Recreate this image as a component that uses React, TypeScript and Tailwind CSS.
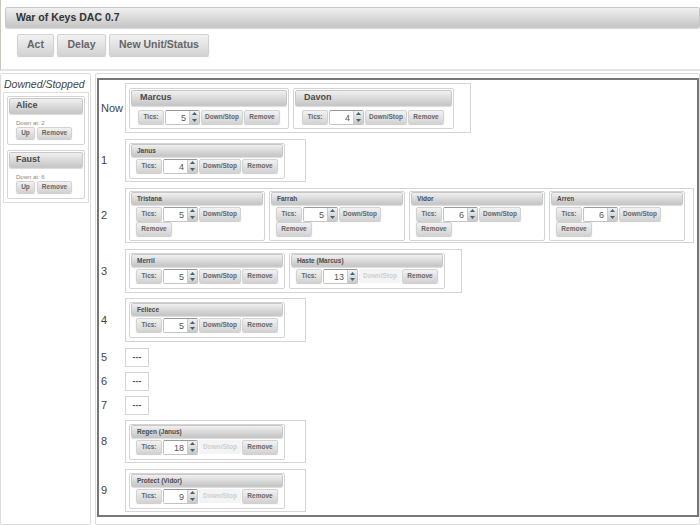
import React from 'react'

const btn =
  'flex items-center justify-center rounded-[2px] border border-[#d2d2d2] bg-linear-to-b from-[#f2f2f2] to-[#d4d4d4] font-bold text-[#666] shadow-[0_1px_1px_rgba(0,0,0,0.2)]'
const bar =
  'flex items-center rounded-[2px] border border-[#c8c8c8] bg-linear-to-b from-[#f0f0f0] to-[#c6c6c6] font-bold text-[#4a4a4a] shadow-[0_1px_1px_rgba(0,0,0,0.15)]'

interface UnitProps {
  name: string
  tics: number
  big?: boolean
  wrap?: boolean
  disabled?: boolean
  width?: string
}

const Spinner = () => (
  <div className="flex w-[10px] flex-col border-l border-[#ccc]">
    <div className="flex h-1/2 items-center justify-center bg-linear-to-b from-[#f2f2f2] to-[#ddd]">
      <svg width="5" height="3" viewBox="0 0 5 3"><path d="M2.5 0L5 3H0z" fill="#3f6478" /></svg>
    </div>
    <div className="flex h-1/2 items-center justify-center bg-linear-to-b from-[#ddd] to-[#c8c8c8]">
      <svg width="5" height="3" viewBox="0 0 5 3"><path d="M0 0h5L2.5 3z" fill="#3f6478" /></svg>
    </div>
  </div>
)

const Unit = ({ name, tics, big, wrap, disabled, width }: UnitProps) => (
  <div className={`rounded-[2px] border border-[#d4d4d4] bg-white px-[1px] ${width} ${big ? 'pt-[1px]' : 'pt-[0px]'}`}>
    <div className={`${bar} ${big ? 'h-[16px] pl-[8px] text-[9px]' : 'h-[13px] pt-[1px] pl-[5px] text-[6.5px]'}`}>{name}</div>
    <div className={`flex flex-wrap items-start ${big ? 'mt-[4px] pb-[3px] pl-[7px]' : 'mt-[2px] pb-[4px] pl-[5px]'}`}>
      <div className={`${btn} h-[14px] w-[26px] text-[6.5px]`}>Tics:</div>
      <div className="ml-[1px] flex h-[15px] w-[35px] overflow-hidden rounded-[2px] border border-[#c4c4c4] border-t-[#999]">
        <div className="flex-1 pr-[3px] text-right text-[9px] leading-[14px] text-[#555]">{tics}</div>
        <Spinner />
      </div>
      <div
        className={`ml-[1px] flex h-[14px] w-[42px] items-center justify-center rounded-[2px] text-[6.5px] font-bold ${
          disabled ? 'bg-[#f4f4f4] text-[#cfcfcf]' : `${btn}`
        }`}
      >
        Down/Stop
      </div>
      <div className={`${btn} ${wrap ? '' : 'ml-[1px]'} h-[14px] w-[36px] text-[6.5px]`}>Remove</div>
    </div>
  </div>
)

const Downed = ({ name, at }: { name: string; at: number }) => (
  <div className="rounded-[2px] border border-[#d4d4d4] bg-white px-[1px] pt-[1px] pb-[5px]">
    <div className={`${bar} h-[16px] pl-[6px] text-[9px]`}>{name}</div>
    <div className="mt-[5px] ml-[7px] text-[6px] leading-[8px] text-[#888]">Down at: {at}</div>
    <div className="ml-[7px] flex gap-[2px]">
      <div className={`${btn} h-[12px] w-[19px] text-[6.5px]`}>Up</div>
      <div className={`${btn} h-[12px] w-[35px] text-[6.5px]`}>Remove</div>
    </div>
  </div>
)

const Row = ({ label, children, gap }: { label: string; children: React.ReactNode; gap: string }) => (
  <div className={`flex items-center ${gap}`}>
    <div className="w-[24px] text-[11px] text-[#444]">{label}</div>
    {children}
  </div>
)

const Box = ({ children, height, width }: { children: React.ReactNode; height: string; width: string }) => (
  <div className={`flex items-center gap-[4px] border border-[#d4d4d4] bg-white pl-[3px] ${height} ${width}`}>{children}</div>
)

const Empty = () => (
  <div className="flex h-[19px] w-[24px] items-center justify-center border border-[#d4d4d4] text-[9px] font-bold text-[#555]">---</div>
)

export default function App() {
  return (
    <div className="h-[525px] w-[700px] overflow-hidden bg-white font-['Liberation_Sans',Arial,sans-serif]">
      <div className="h-[71px] border-b-2 border-l border-b-[#e4e4e4] border-l-[#c4cbbd] pt-[7px] pl-[4px]">
        <div className={`${bar} h-[21px] pl-[10px] text-[10.5px] text-[#333]`}>War of Keys DAC 0.7</div>
        <div className="mt-[6px] ml-[12px] flex gap-[3px]">
          <div className={`${btn} h-[22px] w-[37px] text-[10.5px]`}>Act</div>
          <div className={`${btn} h-[22px] w-[49px] text-[10.5px]`}>Delay</div>
          <div className={`${btn} h-[22px] w-[100px] text-[10.5px]`}>New Unit/Status</div>
        </div>
      </div>
      <div className="mt-[2px] flex gap-[4px]">
        <div className="h-[452px] w-[91px] rounded-[2px] border border-[#dcdcdc] pt-[3px] pl-[2px]">
          <div className="pl-[1px] text-[10.5px] leading-[14px] text-[#444] italic">Downed/Stopped</div>
          <div className="mt-[1px] flex w-[86px] flex-col gap-[5px] border border-[#dcdcdc] p-[3px]">
            <Downed name="Alice" at={2} />
            <Downed name="Faust" at={6} />
          </div>
        </div>
        <div className="h-[452px] w-[605px] rounded-[2px] border border-[#dcdcdc] pt-[4px] pl-[1px]">
          <div className="h-[439px] w-[602px] border-2 border-[#777] pt-[3px] pl-[2px]">
            <Row label="Now" gap="mb-[6px]">
              <Box height="h-[50px]" width="w-[346px]">
                <Unit big name="Marcus" tics={5} width="w-[160px]" />
                <Unit big name="Davon" tics={4} width="w-[161px]" />
              </Box>
            </Row>
            <Row label="1" gap="mb-[6px]">
              <Box height="h-[43px]" width="w-[181px]">
                <Unit name="Janus" tics={4} width="w-[156px]" />
              </Box>
            </Row>
            <Row label="2" gap="mb-[6px]">
              <Box height="h-[55px]" width="w-[569px]">
                <Unit wrap name="Tristana" tics={5} width="w-[136px]" />
                <Unit wrap name="Farrah" tics={5} width="w-[136px]" />
                <Unit wrap name="Vidor" tics={6} width="w-[136px]" />
                <Unit wrap name="Arren" tics={6} width="w-[136px]" />
              </Box>
            </Row>
            <Row label="3" gap="mb-[5px]">
              <Box height="h-[44px]" width="w-[337px]">
                <Unit name="Merril" tics={5} width="w-[156px]" />
                <Unit name="Haste (Marcus)" tics={13} disabled width="w-[156px]" />
              </Box>
            </Row>
            <Row label="4" gap="mb-[6px]">
              <Box height="h-[44px]" width="w-[181px]">
                <Unit name="Feliece" tics={5} width="w-[156px]" />
              </Box>
            </Row>
            <Row label="5" gap="mb-[5px]"><Empty /></Row>
            <Row label="6" gap="mb-[5px]"><Empty /></Row>
            <Row label="7" gap="mb-[5px]"><Empty /></Row>
            <Row label="8" gap="mb-[6px]">
              <Box height="h-[43px]" width="w-[181px]">
                <Unit name="Regen (Janus)" tics={18} disabled width="w-[156px]" />
              </Box>
            </Row>
            <Row label="9" gap="">
              <Box height="h-[43px]" width="w-[181px]">
                <Unit name="Protect (Vidor)" tics={9} disabled width="w-[156px]" />
              </Box>
            </Row>
          </div>
        </div>
      </div>
    </div>
  )
}
